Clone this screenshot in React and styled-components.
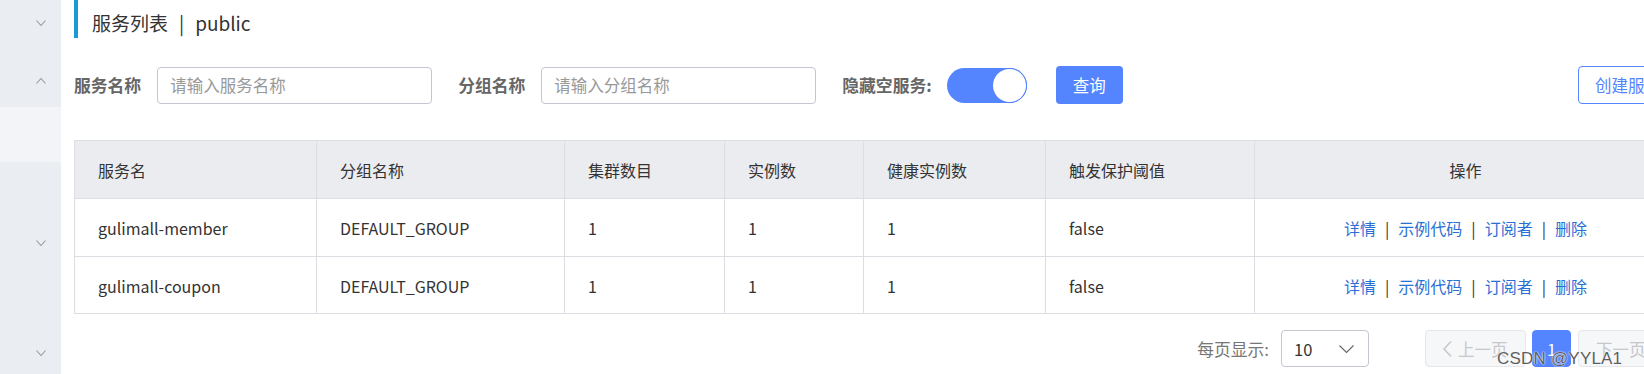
import React from "react";
import styled, { createGlobalStyle } from "styled-components";

const GlobalStyle = createGlobalStyle`
  html, body { margin: 0; padding: 0; background: #fff; overflow: hidden; }
  body { font-family: "Noto Sans CJK SC", "Noto Sans", sans-serif; color: #333; }
  * { box-sizing: border-box; }
`;

const Page = styled.div`
  display: flex;
  width: 1689px;
  min-height: 100vh;
  position: relative;
`;

const Sidebar = styled.aside`
  width: 61px;
  flex: none;
  background: #eaedf1;
  display: flex;
  flex-direction: column;
`;

const MenuRow = styled.div`
  height: ${(p) => p.$h}px;
  margin-top: ${(p) => p.$mt || 0}px;
  background: ${(p) => (p.$light ? "#f3f4f7" : "transparent")};
  display: flex;
  align-items: center;
  justify-content: flex-end;
  padding-right: 15px;
`;

const Main = styled.main`
  flex: 1;
  padding: 0 13px;
  display: flex;
  flex-direction: column;
`;

const TitleBar = styled.div`
  height: 38px;
  border-left: 4px solid #169bd5;
  padding: 6px 0 0 14px;
  display: flex;
  align-items: center;
  font-size: 19px;
  color: #333;
`;

const TitleSep = styled.span`
  margin: 0 11px;
`;

const FilterRow = styled.div`
  margin-top: 28px;
  height: 38px;
  display: flex;
  align-items: center;
`;

const Label = styled.span`
  font-size: 16.8px;
  font-weight: bold;
  color: #666;
  margin-left: ${(p) => p.$ml || 0}px;
  margin-right: ${(p) => p.$mr || 16}px;
  white-space: nowrap;
`;

const Input = styled.input`
  width: 275px;
  height: 37px;
  border: 1px solid #c4c6cf;
  border-radius: 4px;
  padding: 0 12px;
  font-size: 16.5px;
  font-family: inherit;
  color: #333;
  outline: none;
  &::placeholder { color: #999; }
`;

const Switch = styled.div`
  width: 80px;
  height: 35px;
  border-radius: 18px;
  background: #5584ff;
  display: flex;
  align-items: center;
  justify-content: flex-end;
  padding: 1px;
`;

const Knob = styled.div`
  width: 33px;
  height: 33px;
  border-radius: 50%;
  background: #fff;
  box-shadow: 0 0 0 1px #5584ff;
`;

const PrimaryButton = styled.button`
  margin-left: 29px;
  width: 67px;
  height: 38px;
  border: none;
  border-radius: 4px;
  background: #5584ff;
  color: #fff;
  font-size: 16.5px;
  font-family: inherit;
  padding: 0;
`;

const Spacer = styled.div`
  flex: 1;
`;

const OutlineButton = styled.button`
  width: 99px;
  height: 38px;
  border: 1px solid #5584ff;
  border-radius: 4px;
  background: #fff;
  color: #5584ff;
  font-size: 16.5px;
  font-family: inherit;
  padding: 0 0 0 16px;
  text-align: left;
  white-space: nowrap;
  overflow: hidden;
`;

const Table = styled.table`
  margin-top: 36px;
  width: 1602px;
  table-layout: fixed;
  border-collapse: collapse;
  border: 1px solid #dcdee3;
  font-size: 16px;
`;

const Th = styled.th`
  height: 58px;
  background: #ebecf0;
  border: 1px solid #dcdee3;
  padding: 0 23px;
  font-weight: normal;
  text-align: ${(p) => p.$align || "left"};
  color: #333;
`;

const Td = styled.td`
  height: 57.5px;
  border: 1px solid #dcdee3;
  padding: 2px 23px 0;
  text-align: ${(p) => p.$align || "left"};
  color: #333;
`;

const Link = styled.a`
  color: #2a70d4;
  text-decoration: none;
`;

const Bar = styled.span`
  color: #333;
  margin: 0 9px;
`;

const Pagination = styled.div`
  margin-top: 16px;
  display: flex;
  justify-content: flex-end;
  align-items: center;
  height: 37px;
`;

const PageLabel = styled.span`
  color: #777;
  font-size: 16.8px;
  margin-right: 12px;
`;

const Select = styled.div`
  width: 88px;
  height: 37px;
  border: 1px solid #c4c6cf;
  border-radius: 4px;
  display: flex;
  align-items: center;
  justify-content: space-between;
  padding: 0 14px 0 12px;
  font-size: 16.5px;
  color: #333;
  margin-right: 56px;
`;

const PageButton = styled.div`
  height: 37px;
  width: ${(p) => p.$w}px;
  margin-left: ${(p) => p.$ml || 0}px;
  border-radius: 4px;
  display: flex;
  align-items: center;
  justify-content: ${(p) => (p.$center ? "center" : "flex-start")};
  padding-left: ${(p) => (p.$center ? 0 : 17)}px;
  gap: 6px;
  font-size: 16.5px;
  white-space: nowrap;
  overflow: hidden;
  background: ${(p) => (p.$active ? "#5584ff" : "#f6f7f9")};
  border: 1px solid ${(p) => (p.$active ? "#5584ff" : "#e6e7eb")};
  color: ${(p) => (p.$active ? "#fff" : "#c6c7cc")};
`;

const Watermark = styled.div`
  position: absolute;
  left: 1497px;
  top: 349px;
  font-family: "Liberation Sans", Arial, sans-serif;
  font-size: 17px;
  color: #5e5e5e;
  letter-spacing: 0.2px;
  text-shadow: 0 0 2px #fff, 0 0 1px #fff;
  white-space: nowrap;
`;

const Chevron = ({ up, color = "#9a9a9a", w = 10, h = 6 }) => (
  <svg width={w} height={h} viewBox={`0 0 ${w} ${h}`} fill="none">
    <polyline
      points={up ? `0.5,${h - 0.5} ${w / 2},0.5 ${w - 0.5},${h - 0.5}` : `0.5,0.5 ${w / 2},${h - 0.5} ${w - 0.5},0.5`}
      stroke={color}
      strokeWidth="1.1"
    />
  </svg>
);

const LeftChevron = () => (
  <svg width="9" height="16" viewBox="0 0 9 16" fill="none">
    <polyline points="8,0.5 1,8 8,15.5" stroke="#c6c7cc" strokeWidth="1.5" />
  </svg>
);

const rows = [
  { name: "gulimall-member", group: "DEFAULT_GROUP", clusters: 1, instances: 1, healthy: 1, threshold: "false" },
  { name: "gulimall-coupon", group: "DEFAULT_GROUP", clusters: 1, instances: 1, healthy: 1, threshold: "false" },
];

const widths = [242, 248, 160, 139, 182, 209, 422];
const headers = ["服务名", "分组名称", "集群数目", "实例数", "健康实例数", "触发保护阈值"];

export default function App() {
  return (
    <>
      <GlobalStyle />
      <Page>
        <Sidebar>
          <MenuRow $h={46}><Chevron /></MenuRow>
          <MenuRow $h={46} $mt={12}><Chevron up /></MenuRow>
          <MenuRow $h={55} $mt={3} $light />
          <MenuRow $h={162}><Chevron /></MenuRow>
          <MenuRow $h={58}><Chevron /></MenuRow>
        </Sidebar>
        <Main>
          <TitleBar>
            服务列表<TitleSep>|</TitleSep>public
          </TitleBar>
          <FilterRow>
            <Label>服务名称</Label>
            <Input placeholder="请输入服务名称" />
            <Label $ml={26}>分组名称</Label>
            <Input placeholder="请输入分组名称" />
            <Label $ml={26} $mr={15}>隐藏空服务:</Label>
            <Switch><Knob /></Switch>
            <PrimaryButton>查询</PrimaryButton>
            <Spacer />
            <OutlineButton>创建服务</OutlineButton>
          </FilterRow>
          <Table>
            <colgroup>
              {widths.map((w, i) => <col key={i} style={{ width: w }} />)}
            </colgroup>
            <thead>
              <tr>
                {headers.map((h) => <Th key={h}>{h}</Th>)}
                <Th $align="center">操作</Th>
              </tr>
            </thead>
            <tbody>
              {rows.map((r) => (
                <tr key={r.name}>
                  <Td>{r.name}</Td>
                  <Td>{r.group}</Td>
                  <Td>{r.clusters}</Td>
                  <Td>{r.instances}</Td>
                  <Td>{r.healthy}</Td>
                  <Td>{r.threshold}</Td>
                  <Td $align="center">
                    <Link>详情</Link><Bar>|</Bar>
                    <Link>示例代码</Link><Bar>|</Bar>
                    <Link>订阅者</Link><Bar>|</Bar>
                    <Link>删除</Link>
                  </Td>
                </tr>
              ))}
            </tbody>
          </Table>
          <Pagination>
            <PageLabel>每页显示:</PageLabel>
            <Select>
              <span>10</span>
              <Chevron color="#666" w={15} h={8} />
            </Select>
            <PageButton $w={101}><LeftChevron />上一页</PageButton>
            <PageButton $w={39} $ml={6} $active $center>1</PageButton>
            <PageButton $w={99} $ml={7}>下一页</PageButton>
          </Pagination>
        </Main>
        <Watermark>CSDN @YYLA1</Watermark>
      </Page>
    </>
  );
}
